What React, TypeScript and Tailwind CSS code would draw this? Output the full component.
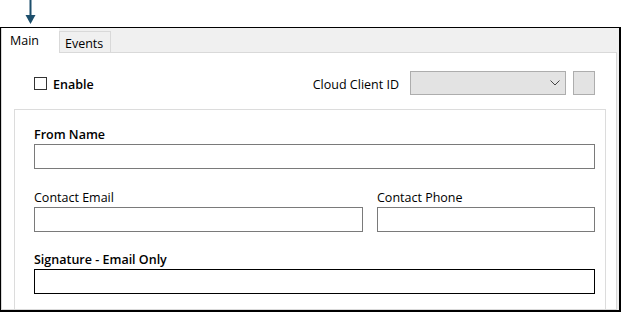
import React from "react";

const font = { fontFamily: '"Open Sans", "Noto Sans", Arial, sans-serif' };

export default function App() {
  return (
    <div className="w-[621px] h-[312px] bg-white text-[12px] text-[#000] relative overflow-hidden" style={font}>
      {/* arrow */}
      <svg className="absolute left-[25px] top-0" width="12" height="26" viewBox="0 0 12 26">
        <rect x="4.5" y="0" width="2" height="17" fill="#1d4f6c" />
        <polygon points="0.5,15 10.5,15 5.5,24" fill="#1d4f6c" />
      </svg>
      <div className="h-[27px]" />
      <div className="h-[285px] border-l border-t border-r-2 border-b-2 border-black bg-[#f0f0f0] flex flex-col pr-[2px]">
        {/* tab strip */}
        <div className="h-[25px] flex items-end">
          <div className="h-[25px] w-[58px] bg-white border-l border-[#d9d9d9] pl-[8px] pt-[4px] text-[12.5px] leading-[18px] relative z-10">
            Main
          </div>
          <div className="h-[22px] w-[52px] border border-b-0 border-[#d9d9d9] bg-[#f0f0f0] pl-[5px] pt-[3px] text-[12.5px] leading-[18px]">
            Events
          </div>
        </div>
        {/* tab page */}
        <div className="flex-1 bg-white border border-[#d9d9d9] -mt-[1px] flex flex-col">
          <div className="flex items-center h-[24px] mt-[18px]">
            <div className="ml-[32px] w-[13px] h-[13px] border border-[#333] bg-white" />
            <span className="ml-[6px] pt-[4px] font-semibold text-[12.5px]">Enable</span>
            <span className="ml-auto pt-[4px] text-[12.5px]">Cloud Client ID</span>
            <div className="ml-[11px] w-[156px] h-[24px] bg-[#e3e3e3] border border-[#adadad] flex items-center justify-end pr-[5px]">
              <svg width="10" height="6" viewBox="0 0 10 6">
                <polyline points="0.5,0.5 5,5 9.5,0.5" fill="none" stroke="#444" strokeWidth="1" />
              </svg>
            </div>
            <div className="ml-[7px] w-[22px] h-[24px] bg-[#e3e3e3] border border-[#adadad] mr-[21px]" />
          </div>
          <div className="mt-[14px] ml-[12px] w-[592px] flex-1 border-l border-t border-r border-[#dcdcdc] pl-[19px] pt-[14px] pr-[11px]">
            <div className="pt-[2px] font-semibold text-[12.5px] leading-[17px]">From Name</div>
            <div className="mt-[1px] w-[561px] h-[25px] border border-[#7a7a7a]" />
            <div className="flex gap-[14px] mt-[18px]">
              <div>
                <div className="pt-[2px] text-[12.5px] leading-[17px]">Contact Email</div>
                <div className="mt-[1px] w-[329px] h-[25px] border border-[#7a7a7a]" />
              </div>
              <div>
                <div className="pt-[2px] text-[12.5px] leading-[17px]">Contact Phone</div>
                <div className="mt-[1px] w-[218px] h-[25px] border border-[#7a7a7a]" />
              </div>
            </div>
            <div className="mt-[17px] pt-[2px] font-semibold text-[12.5px] leading-[17px]">Signature - Email Only</div>
            <div className="mt-[1px] w-[561px] h-[25px] border border-black" />
          </div>
        </div>
      </div>
    </div>
  );
}
